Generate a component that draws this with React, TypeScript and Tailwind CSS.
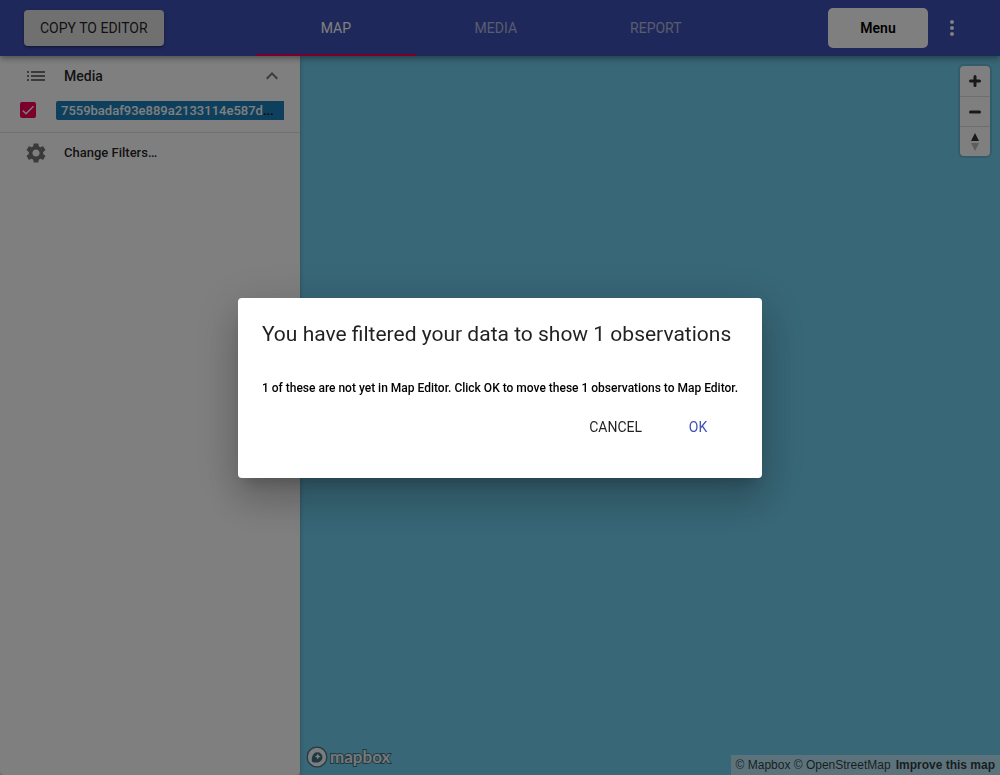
import React from 'react';
import { MdCheck, MdExpandLess, MdList, MdMoreVert, MdSettings } from 'react-icons/md';

const tabs = ['MAP', 'MEDIA', 'REPORT'];

function Header() {
  return (
    <header className="relative z-10 flex h-14 items-center justify-between bg-[#3f51b5] px-6 shadow-[0_2px_4px_-1px_rgba(0,0,0,0.2),0_4px_5px_rgba(0,0,0,0.14),0_1px_10px_rgba(0,0,0,0.12)]">
      <button
        type="button"
        className="h-9 rounded bg-[#e0e0e0] px-4 text-sm text-black/87 shadow-[0_1px_5px_rgba(0,0,0,0.2),0_2px_2px_rgba(0,0,0,0.14),0_3px_1px_-2px_rgba(0,0,0,0.12)]"
      >
        COPY TO EDITOR
      </button>
      <nav role="tablist" className="flex h-full">
        {tabs.map((tab, i) => (
          <button
            key={tab}
            type="button"
            role="tab"
            aria-selected={i === 0}
            className={
              i === 0
                ? 'w-40 border-y-2 border-t-transparent border-b-[#f50057] text-sm text-white'
                : 'w-40 text-sm text-white/60'
            }
          >
            {tab}
          </button>
        ))}
      </nav>
      <div className="flex items-center">
        <button type="button" className="h-10 w-25 rounded-[5px] bg-white text-sm font-semibold text-black">
          Menu
        </button>
        <button type="button" aria-label="More options" className="flex size-12 items-center justify-center text-white">
          <MdMoreVert size={24} />
        </button>
      </div>
    </header>
  );
}

function Sidebar() {
  return (
    <aside className="relative w-75 shrink-0 rounded-b bg-white shadow-[0_1px_5px_rgba(0,0,0,0.2),0_2px_2px_rgba(0,0,0,0.14)]">
      <section className="border-b border-black/12 pb-2">
        <button type="button" className="flex h-10 w-full items-center pr-4 pl-6 text-sm font-medium text-black/87">
          <MdList size={24} className="mr-4 text-black/54" />
          Media
          <MdExpandLess size={24} className="ml-auto text-black/54" />
        </button>
        <div className="flex h-7 items-center px-4">
          <label className="flex min-w-0 flex-1 items-center">
            <span className="grid size-6 shrink-0 place-items-center">
              <input
                type="checkbox"
                defaultChecked
                className="peer col-start-1 row-start-1 size-4 appearance-none rounded-xs border-2 border-black/54 checked:border-[#f50057] checked:bg-[#f50057]"
              />
              <MdCheck
                size={16}
                className="pointer-events-none invisible col-start-1 row-start-1 text-white peer-checked:visible"
              />
            </span>
            <span className="ml-4 min-w-0 flex-1 rounded-l-xs bg-[#1c7ebb] pl-[5px] text-[13px] leading-[19px] font-medium whitespace-nowrap text-white">
              7559badaf93e889a2133114e587d<span className="text-black/87">...</span>
            </span>
          </label>
        </div>
      </section>
      <button type="button" className="flex h-10 w-full items-center px-6 text-[13px] font-medium text-black/87">
        <MdSettings size={24} className="mr-4 text-black/54" />
        Change Filters…
      </button>
    </aside>
  );
}

function MapboxLogo() {
  return (
    <span className="flex h-6 items-center gap-[2px]">
      <svg width="22" height="22" viewBox="0 0 22 22" aria-hidden="true">
        <circle cx="11" cy="11" r="9.8" fill="#fff" fillOpacity="0.9" stroke="#000" strokeOpacity="0.5" strokeWidth="1.3" />
        <path d="M6 15.8s-1.1-5.1 1.9-8.1a5 5 0 0 1 7.1 7.1c-3.3 3.3-9 1-9 1z" fill="#3d6f80" />
        <path d="M11.8 7.6l.9 2 2 .9-2 .9-.9 2-.9-2-2-.9 2-.9z" fill="#fff" />
      </svg>
      <span className="font-[Lato,sans-serif] text-[17px] leading-6 font-bold text-white/90 [-webkit-text-stroke:2px_rgba(0,0,0,0.45)] [paint-order:stroke_fill]">
        mapbox
      </span>
    </span>
  );
}

function MapView() {
  return (
    <main className="flex min-w-0 flex-1 flex-col justify-between bg-[#70ceee]">
      <div className="m-2.5 flex w-[30px] flex-col self-end rounded bg-white shadow-[0_0_0_2px_rgba(0,0,0,0.1)]">
        <button type="button" aria-label="Zoom in" className="flex h-[30px] items-center justify-center">
          <svg width="20" height="20" viewBox="0 0 20 20" stroke="#333" strokeWidth="3" strokeLinecap="round">
            <path d="M5.5 10h9M10 5.5v9" />
          </svg>
        </button>
        <button type="button" aria-label="Zoom out" className="flex h-[30px] items-center justify-center border-t border-[#ddd]">
          <svg width="20" height="20" viewBox="0 0 20 20" stroke="#333" strokeWidth="3" strokeLinecap="round">
            <path d="M5.5 10h9" />
          </svg>
        </button>
        <button type="button" aria-label="Reset bearing to north" className="flex h-[30px] items-center justify-center border-t border-[#ddd]">
          <svg width="20" height="20" viewBox="0 0 20 20">
            <path d="M6 9l4-8 4 8z" fill="#333" />
            <path d="M6 11l4 8 4-8z" fill="#bbb" />
          </svg>
        </button>
      </div>
      <div className="flex items-end justify-between pl-1.5">
        <a href="#mapbox" className="mb-1.5" aria-label="Mapbox homepage">
          <MapboxLogo />
        </a>
        <div className="flex h-5 items-center gap-[5px] bg-white/50 px-[5px] font-['Liberation_Sans',Arial,sans-serif] text-xs text-black/75">
          <span>
            <a href="#about">© Mapbox</a> <a href="#osm">© OpenStreetMap</a>
          </span>
          <a href="#improve" className="font-bold">
            Improve this map
          </a>
        </div>
      </div>
    </main>
  );
}

function FilterDialog() {
  return (
    <div className="fixed inset-0 z-20 flex items-center justify-center bg-black/50">
      <div
        role="dialog"
        aria-labelledby="dialog-title"
        className="rounded bg-white pb-[33px] shadow-[0_11px_15px_-7px_rgba(0,0,0,0.2),0_24px_38px_3px_rgba(0,0,0,0.14),0_9px_46px_8px_rgba(0,0,0,0.12)]"
      >
        <h2 id="dialog-title" className="px-6 pt-6 pb-5 text-[21px] leading-6 text-black/87">
          You have filtered your data to show 1 observations
        </h2>
        <p className="px-6 pt-3 pb-[11px] text-xs leading-5 font-medium text-black">
          1 of these are not yet in Map Editor. Click OK to move these 1 observations to Map Editor.
        </p>
        <div className="flex justify-end gap-2 px-8 text-sm">
          <button type="button" className="h-9 rounded px-4 text-black/87">
            CANCEL
          </button>
          <button type="button" className="h-9 w-16 rounded text-[#3f51b5]">
            OK
          </button>
        </div>
      </div>
    </div>
  );
}

export default function App() {
  return (
    <div className="flex min-h-screen flex-col font-[Roboto,sans-serif]">
      <Header />
      <div className="flex flex-1">
        <Sidebar />
        <MapView />
      </div>
      <FilterDialog />
    </div>
  );
}
